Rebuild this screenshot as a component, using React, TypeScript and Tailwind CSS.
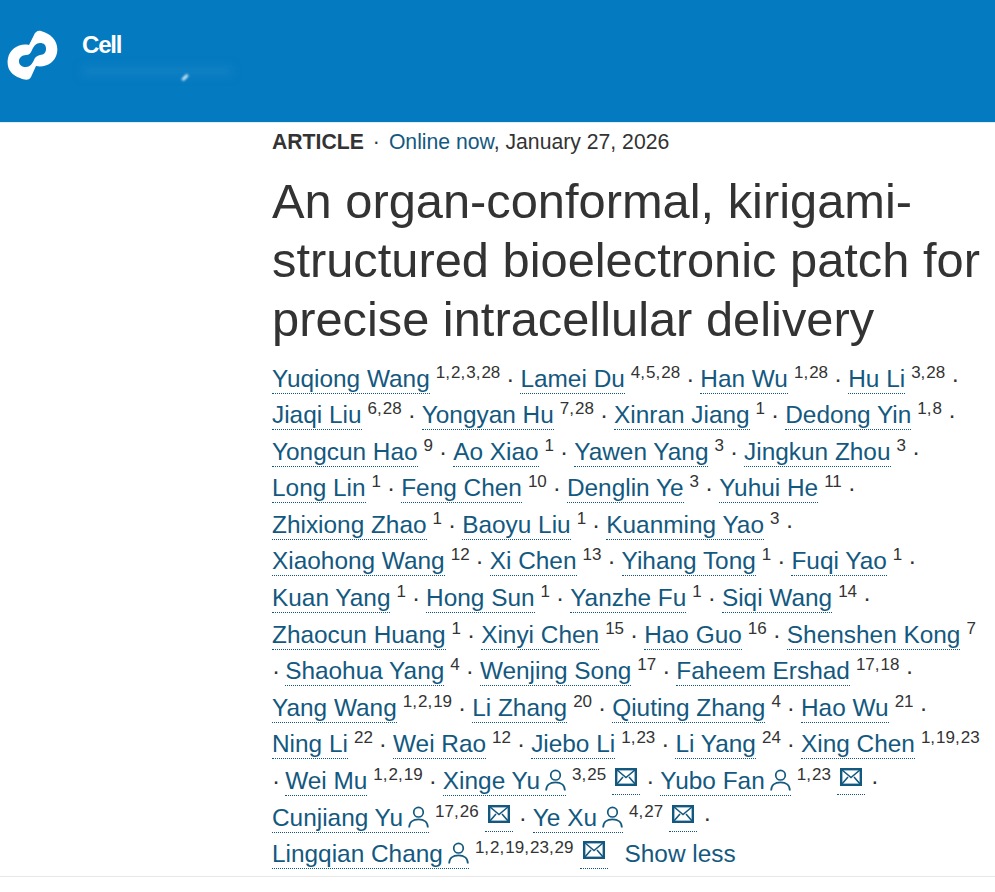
const LINK = "text-[#13597f]";

type Author = { n: string; s: string; p?: boolean; m?: boolean };
type Line = { lead?: boolean; a: Author[]; trail?: boolean; more?: boolean };

const lines: Line[] = [
  { a: [{ n: "Yuqiong Wang", s: "1,2,3,28" }, { n: "Lamei Du", s: "4,5,28" }, { n: "Han Wu", s: "1,28" }, { n: "Hu Li", s: "3,28" }], trail: true },
  { a: [{ n: "Jiaqi Liu", s: "6,28" }, { n: "Yongyan Hu", s: "7,28" }, { n: "Xinran Jiang", s: "1" }, { n: "Dedong Yin", s: "1,8" }], trail: true },
  { a: [{ n: "Yongcun Hao", s: "9" }, { n: "Ao Xiao", s: "1" }, { n: "Yawen Yang", s: "3" }, { n: "Jingkun Zhou", s: "3" }], trail: true },
  { a: [{ n: "Long Lin", s: "1" }, { n: "Feng Chen", s: "10" }, { n: "Denglin Ye", s: "3" }, { n: "Yuhui He", s: "11" }], trail: true },
  { a: [{ n: "Zhixiong Zhao", s: "1" }, { n: "Baoyu Liu", s: "1" }, { n: "Kuanming Yao", s: "3" }], trail: true },
  { a: [{ n: "Xiaohong Wang", s: "12" }, { n: "Xi Chen", s: "13" }, { n: "Yihang Tong", s: "1" }, { n: "Fuqi Yao", s: "1" }], trail: true },
  { a: [{ n: "Kuan Yang", s: "1" }, { n: "Hong Sun", s: "1" }, { n: "Yanzhe Fu", s: "1" }, { n: "Siqi Wang", s: "14" }], trail: true },
  { a: [{ n: "Zhaocun Huang", s: "1" }, { n: "Xinyi Chen", s: "15" }, { n: "Hao Guo", s: "16" }, { n: "Shenshen Kong", s: "7" }] },
  { lead: true, a: [{ n: "Shaohua Yang", s: "4" }, { n: "Wenjing Song", s: "17" }, { n: "Faheem Ershad", s: "17,18" }], trail: true },
  { a: [{ n: "Yang Wang", s: "1,2,19" }, { n: "Li Zhang", s: "20" }, { n: "Qiuting Zhang", s: "4" }, { n: "Hao Wu", s: "21" }], trail: true },
  { a: [{ n: "Ning Li", s: "22" }, { n: "Wei Rao", s: "12" }, { n: "Jiebo Li", s: "1,23" }, { n: "Li Yang", s: "24" }, { n: "Xing Chen", s: "1,19,23" }] },
  { lead: true, a: [{ n: "Wei Mu", s: "1,2,19" }, { n: "Xinge Yu", s: "3,25", p: true, m: true }, { n: "Yubo Fan", s: "1,23", p: true, m: true }], trail: true },
  { a: [{ n: "Cunjiang Yu", s: "17,26", p: true, m: true }, { n: "Ye Xu", s: "4,27", p: true, m: true }], trail: true },
  { a: [{ n: "Lingqian Chang", s: "1,2,19,23,29", p: true, m: true }], more: true },
];

function Person() {
  return (
    <svg viewBox="0 0 22 24" className="ml-[5px] inline-block h-[24px] w-[21px] align-[-3px]" fill="none" stroke="currentColor" strokeWidth="1.8">
      <circle cx="11" cy="7" r="5" />
      <path d="M1.200 23c0-5.400 4-8.500 9.800-8.500s9.800 3.100 9.800 8.500" />
    </svg>
  );
}

function Mail() {
  return (
    <span className={`relative top-[-3px] ml-[6px] inline-block border-b border-dotted border-[#13597f] px-[3px] pb-[4px] leading-none ${LINK}`}>
      <svg viewBox="0 0 22 18" className="inline-block h-[18px] w-[22px] align-[0px]" fill="none" stroke="currentColor" strokeWidth="2.4">
        <rect x="1.200" y="1.200" width="19.600" height="15.600" />
        <path d="M1.500 1.500l9.500 8 9.500-8M1.500 16.500l6.500-7.500M20.500 16.500l-6.500-7.500" strokeWidth="1.600" />
      </svg>
    </span>
  );
}

function Sep() {
  return <span className="mx-[6px] text-[#333]">·</span>;
}

function Sup({ s }: { s: string }) {
  const parts = s.split(",");
  return (
    <span className="relative top-[-9px] ml-[6px] text-[17px] text-[#333]">
      {parts.map((p, i) => (
        <span key={i}>
          {p}
          {i < parts.length - 1 && <span className="mr-[1px]">,</span>}
        </span>
      ))}
    </span>
  );
}

function AuthorItem({ a }: { a: Author }) {
  return (
    <>
      <span className={`border-b border-dotted border-[#13597f] pb-[1px] ${LINK}`}>
        {a.n}
        {a.p && <Person />}
      </span>
      <Sup s={a.s} />
      {a.m && <Mail />}
    </>
  );
}

export default function App() {
  return (
    <div className="h-[892px] w-[995px] overflow-hidden bg-white font-['Liberation_Sans',Arial,sans-serif]">
      <header className="flex h-[123px] border-b border-[#dfeff5] bg-[#047ac0] pl-[7px] pt-[30px]">
        <svg viewBox="0 0 52 52" className="h-[52px] w-[52px]">
          <path
            fill="#fff"
            fillRule="evenodd"
            d="M34 1C45 4 52 12 50 23C48 33 38 38 29 36L24 47C22 51 17 50 13 48C4 45 -1 38 1 28C3 19 12 13 22 15L27 5C28 2 31 0 34 1ZM33 13C29 13 27 16 25 20C24 23 22 25 19 25C15 25 12 28 12 31C12 35 15 37 19 37C23 37 25 34 27 30C28 27 30 26 33 25C37 25 39 22 39 19C39 15 37 13 33 13Z"
          />
        </svg>
        <div className="relative ml-[23px] mt-[3px]">
          <div className="text-[24px] font-bold leading-[24px] tracking-[-1.2px] text-white">Cell</div>
          <div className="mt-[9px] h-[10px] w-[150px] bg-[#1080c3] blur-[4px]" />
          <div className="absolute left-[99px] top-[43px] h-[3px] w-[8px] -rotate-45 rounded-full bg-[#cfeaf8] blur-[1px]" />
        </div>
      </header>
      <main className="pl-[272px]">
        <div className="mt-[5px] h-[27px] text-[21.2px] leading-[27px] text-[#333]">
          <span className="font-bold">ARTICLE</span>
          <span className="mx-[9px]">·</span>
          <span className={LINK}>Online now</span>, January 27, 2026
        </div>
        <h1 className="mt-[17px] text-[48.8px] font-normal leading-[59px] text-[#333]">
          An organ-conformal, kirigami-
          <br />
          structured bioelectronic patch for
          <br />
          precise intracellular delivery
        </h1>
        <div className="mt-[11.5px] text-[24.4px] leading-[36.6px] whitespace-nowrap text-[#333]">
          {lines.map((l, i) => (
            <div key={i} className="h-[36.6px]">
              {l.lead && <span className="mr-[5px]">·</span>}
              {l.a.map((a, j) => (
                <span key={j}>
                  {j > 0 && <Sep />}
                  <AuthorItem a={a} />
                </span>
              ))}
              {l.trail && <Sep />}
              {l.more && <span className={`ml-[17px] ${LINK}`}>Show less</span>}
            </div>
          ))}
        </div>
      </main>
      <div className="mt-[3.5px] h-px w-full bg-[#e5e7eb]" />
    </div>
  );
}
